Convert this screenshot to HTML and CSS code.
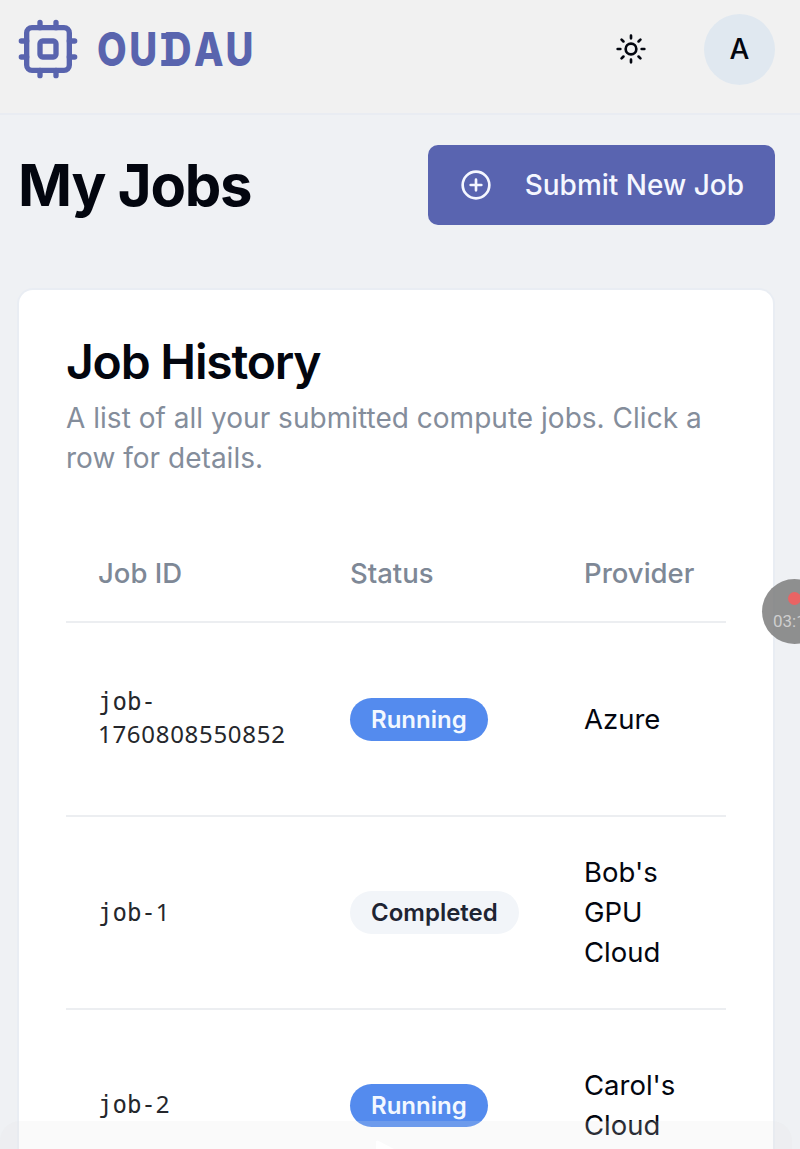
FILE: index.html
```html
<!DOCTYPE html>
<html lang="en">
<head>
<meta charset="utf-8">
<title>My Jobs</title>
<link rel="stylesheet" href="styles.css">
</head>
<body>
<header class="topbar">
  <a class="brand">
    <svg class="brand-icon" viewBox="0 0 24 24"><rect x="4" y="4" width="16" height="16" rx="2"/><rect x="9" y="9" width="6" height="6" rx="1"/><path d="M15 2v2M15 20v2M2 15h2M2 9h2M20 15h2M20 9h2M9 2v2M9 20v2"/></svg>
    <span class="brand-name">OU<span class="brand-d">D</span>AU</span>
  </a>
  <div class="actions">
    <svg class="sun" viewBox="0 0 24 24"><circle cx="12" cy="12" r="4"/><path d="M12 2v2M12 20v2M4.93 4.93l1.41 1.41M17.66 17.66l1.41 1.41M2 12h2M20 12h2M6.34 17.66l-1.41 1.41M19.07 4.93l-1.41 1.41"/></svg>
    <div class="avatar">A</div>
  </div>
</header>
<main class="main">
  <div class="title-row">
    <h1 class="title">My <span class="title-j">J</span>obs</h1>
    <button class="submit">
      <svg class="plus" viewBox="0 0 24 24"><circle cx="12" cy="12" r="10"/><path d="M8 12h8M12 8v8"/></svg>
      <span class="submit-label">Submit New Job</span>
    </button>
  </div>
  <section class="card">
    <h2 class="card-title">Job History</h2>
    <p class="card-text">A list of all your submitted compute jobs. Click a<br>row for details.</p>
    <div class="table">
      <div class="row head"><div>Job ID</div><div>Status</div><div>Provider</div></div>
      <div class="row"><div class="mono">job-<br><span class="num">1760808550852</span></div><div><span class="badge running">Running</span></div><div>Azure</div></div>
      <div class="row"><div class="mono">job-<span class="num">1</span></div><div><span class="badge completed">Completed</span></div><div>Bob's<br>GPU<br>Cloud</div></div>
      <div class="row last"><div class="mono">job-<span class="num">2</span></div><div><span class="badge running">Running</span></div><div>Carol's<br>Cloud</div></div>
    </div>
  </section>
</main>
<div class="recorder"><i class="rec-dot"></i><span class="rec-time">03:1</span></div>
<div class="sheet"><svg class="sheet-arrow" viewBox="0 0 20 10"><path d="M0 10V1.500Q1 0 3 1L20 10Z"/></svg></div>
</body>
</html>
```
FILE: styles.css
```css
*, *::before { box-sizing: border-box; }
body { margin: 0; height: 1149px; overflow: hidden; position: relative; background: #eff1f4; color: #03060f; font-family: Inter, "Liberation Sans", sans-serif; font-size: 27.5px; }
svg { fill: none; stroke: currentColor; stroke-width: 2; stroke-linecap: round; stroke-linejoin: round; display: block; flex: none; }
h1, h2, p { margin: 0; }
.topbar { height: 115px; padding: 0 25px 15px 16px; display: flex; align-items: center; justify-content: space-between; background: #f1f1f1; border-bottom: 2px solid #e9ecf2; }
.brand { display: flex; align-items: center; gap: 17px; color: #5964ae; }
.brand-icon { width: 64px; height: 64px; }
.brand-name { display: block; width: 160px; white-space: nowrap; font: 800 46px/64px Inter, sans-serif; letter-spacing: 3px; transform: scaleX(.835); transform-origin: left; }
.brand-d { position: relative; display: inline-block; margin-left: 5px; }
.brand-d::before { content: ""; position: absolute; left: -3px; top: 16px; width: 10px; height: 33px; border: solid currentColor; border-width: 6px 0; }
.actions { display: flex; align-items: center; gap: 57px; }
.sun { width: 32px; height: 32px; }
.avatar { flex: none; width: 71px; height: 71px; border-radius: 50%; background: #e0e8f0; font-size: 28px; font-weight: 500; display: flex; align-items: center; justify-content: center; }
.main { padding: 29px 25px 0 18px; }
.title-row { display: flex; justify-content: space-between; align-items: center; height: 81px; }
.title { font-size: 58px; font-weight: 700; line-height: 80px; letter-spacing: -1.2px; }
.title-j { position: relative; display: inline-block; }
.title-j::before { content: ""; position: absolute; left: 9px; top: 19px; width: 16px; height: 8px; background: currentColor; }
.submit { width: 347px; height: 80px; border: 0; border-radius: 10px; padding: 0 31px 0 32px; background: #5964b0; color: #f5f7ff; font: 500 28px/40px Inter, sans-serif; display: flex; align-items: center; justify-content: space-between; }
.plus { width: 32px; height: 32px; }
.card { margin: 63px 0 0 -1px; width: 758px; height: 861px; padding: 48px 47px 0; background: #fff; border: 2px solid #e9edf3; border-bottom: 0; border-radius: 16px 16px 0 0; }
.card-title { font-size: 48px; font-weight: 600; line-height: 48px; letter-spacing: -1.2px; }
.card-text { margin-top: 13px; font-size: 28px; line-height: 39.5px; letter-spacing: .02px; color: #848d9b; }
.table { margin-top: 47px; width: 660px; }
.row { display: grid; grid-template-columns: 252px 234px 174px; align-items: center; height: 193.5px; padding-left: 32px; border-bottom: 2px solid #eceef1; line-height: 40px; }
.last { height: 139px; border-bottom: 0; align-items: start; padding-top: 55px; }
.last .mono { margin-top: 23px; }
.last .badge { margin-top: 19px; }
.head { height: 98px; color: #7e8896; font-weight: 500; }
.mono { font: 24px/32px "DejaVu Sans Mono", monospace; color: #25272c; }
.num { font-family: "Noto Sans", sans-serif; letter-spacing: .7px; }
.badge { display: inline-block; vertical-align: middle; height: 43px; line-height: 43px; border-radius: 22px; padding: 0 21px; font-size: 24px; font-weight: 600; }
.running { background: #548bee; color: #f3f8ff; }
.completed { background: #f2f5f9; color: #1e2433; }
.recorder { position: absolute; left: 762px; top: 579px; width: 65px; height: 65px; border-radius: 50%; background: rgba(128,128,128,.87); }
.rec-dot { position: absolute; left: 26px; top: 13px; width: 13px; height: 13px; border-radius: 50%; background: #e96464; }
.rec-time { position: absolute; left: 11px; top: 32px; font: 17px/20px Roboto, sans-serif; color: #cecece; }
.sheet { position: absolute; left: 0; top: 1121px; width: 792px; height: 28px; border-radius: 20px 20px 0 0; background: rgba(225,225,228,.18); }
.sheet-arrow { position: absolute; left: 375px; top: 19px; width: 20px; height: 9px; fill: #fff; stroke: none; }
```
